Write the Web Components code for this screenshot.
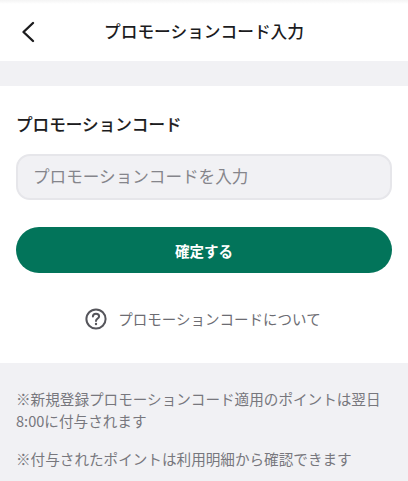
<!DOCTYPE html>
<html lang="ja">
<head>
<meta charset="utf-8">
<title>プロモーションコード入力</title>
<style>
html, body { margin: 0; padding: 0; height: 100%; background: #f1f1f4; }
body { font-family: "Noto Sans CJK JP", "Noto Sans", sans-serif; overflow: hidden; }
</style>
</head>
<body>
<promo-header>プロモーションコード入力</promo-header>
<promo-form label="プロモーションコード" placeholder="プロモーションコードを入力" action="確定する">プロモーションコードについて</promo-form>
<promo-notes>
  <p>※新規登録プロモーションコード適用のポイントは翌日8:00に付与されます</p>
  <p>※付与されたポイントは利用明細から確認できます</p>
</promo-notes>

<script>
const headerTemplate = document.createElement('template');
headerTemplate.innerHTML = `
<style>
:host {
    display: flex;
    align-items: center;
    justify-content: center;
    position: relative;
    height: 61px;
    margin-bottom: 25px;
    background: linear-gradient(#f4f4f4, #ffffff 4px);
    color: #1c1c1e;
    font-size: 16.7px;
    font-weight: 500;
}
#back {
    position: absolute;
    left: 20px;
    top: 20px;
    width: 17px;
    height: 24px;
}
#title { margin-top: 1px; }
</style>
<svg id="back" viewBox="0 0 17 24" fill="none" stroke="#1c1c1e" stroke-width="2.4" stroke-linecap="round" stroke-linejoin="round">
    <path d="M13 3 L3.5 12 L13 21"/>
</svg>
<span id="title"><slot></slot></span>
`;

class PromoHeader extends HTMLElement {
    constructor() {
        super();
        this.attachShadow({mode: 'open'});
        this.shadowRoot.appendChild(headerTemplate.content.cloneNode(true));
    }
}

const formTemplate = document.createElement('template');
formTemplate.innerHTML = `
<style>
:host {
    display: flex;
    flex-direction: column;
    height: 277px;
    box-sizing: border-box;
    padding: 26px 16px 0;
    background: #ffffff;
}
#label {
    font-size: 16.6px;
    line-height: 24px;
    font-weight: 500;
    color: #1c1c1e;
    -webkit-text-stroke: 0.15px #1c1c1e;
}
#field {
    display: flex;
    align-items: center;
    box-sizing: border-box;
    height: 46px;
    margin-top: 18px;
    padding: 0 15px 2px;
    background: #f1f1f4;
    border: 2px solid #e6e6ea;
    border-radius: 14px;
    font-size: 16.6px;
    color: #85858b;
}
#submit {
    display: flex;
    align-items: center;
    justify-content: center;
    height: 46px;
    margin-top: 27px;
    background: #02745a;
    border-radius: 23px;
    color: #ffffff;
    font-size: 14.5px;
    font-weight: 700;
}
#about {
    display: flex;
    align-items: center;
    justify-content: center;
    gap: 11px;
    margin-top: 34px;
    padding-right: 2px;
    font-size: 14.5px;
    line-height: 24px;
    color: #6c6c72;
}
#about svg { width: 22px; height: 22px; }
</style>
<div id="label"></div>
<div id="field"></div>
<div id="submit"></div>
<div id="about">
    <svg viewBox="0 0 22 22" fill="none" stroke="#55555b">
        <circle cx="11" cy="11" r="9.6" stroke-width="2"/>
        <path d="M7.9 8.6 C7.9 6.8 9.3 5.8 11 5.8 C12.8 5.8 14.1 6.9 14.1 8.4 C14.1 10.5 11 10.6 11 13" stroke-width="2" stroke-linecap="round"/>
        <circle cx="11" cy="16" r="1.2" fill="#55555b" stroke="none"/>
    </svg>
    <span><slot></slot></span>
</div>
`;

class PromoForm extends HTMLElement {
    constructor() {
        super();
        this.attachShadow({mode: 'open'});
        this.shadowRoot.appendChild(formTemplate.content.cloneNode(true));
    }

    connectedCallback() {
        this.shadowRoot.getElementById('label').textContent = this.getAttribute('label');
        this.shadowRoot.getElementById('field').textContent = this.getAttribute('placeholder');
        this.shadowRoot.getElementById('submit').textContent = this.getAttribute('action');
    }
}

const notesTemplate = document.createElement('template');
notesTemplate.innerHTML = `
<style>
:host {
    display: block;
    padding: 25px 16px 0;
    font-size: 14.6px;
    line-height: 22px;
    color: #77777d;
}
::slotted(p) {
    margin: 0 0 16px;
}
</style>
<slot></slot>
`;

class PromoNotes extends HTMLElement {
    constructor() {
        super();
        this.attachShadow({mode: 'open'});
        this.shadowRoot.appendChild(notesTemplate.content.cloneNode(true));
    }
}

window.customElements.define('promo-header', PromoHeader);
window.customElements.define('promo-form', PromoForm);
window.customElements.define('promo-notes', PromoNotes);
</script>
</body>
</html>
